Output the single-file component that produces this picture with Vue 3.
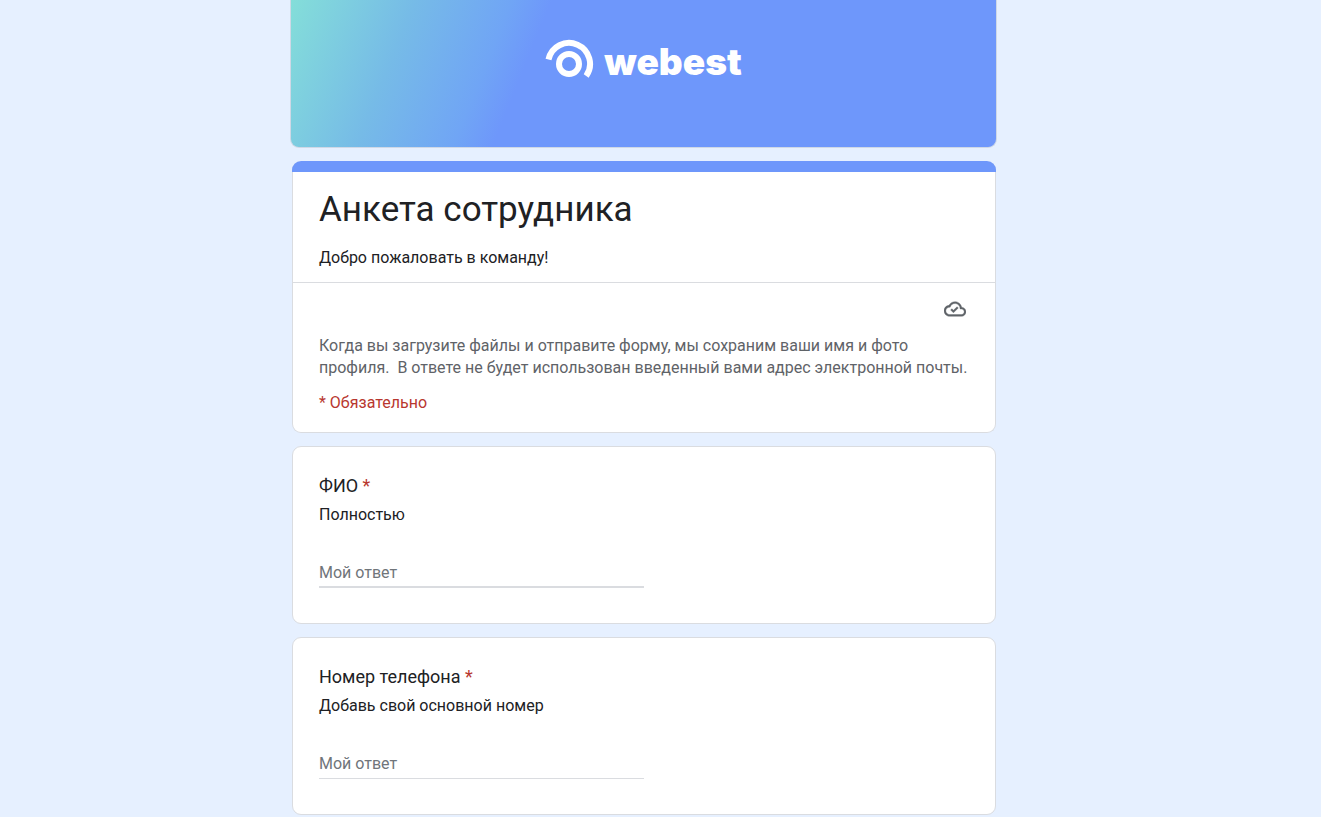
<script setup>
import { ref } from 'vue'

const questions = ref([
  { id: 'name', title: 'ФИО', hint: 'Полностью', answer: '', active: true },
  { id: 'phone', title: 'Номер телефона', hint: 'Добавь свой основной номер', answer: '', active: false },
])
</script>

<template>
  <main class="page">
    <form class="column" @submit.prevent>
      <header class="banner">
        <svg class="mark" viewBox="0 0 50 42" aria-hidden="true">
          <circle cx="24" cy="26" r="10" />
          <path d="M3.5 21.5A21 21 0 1 1 41.2 38" />
        </svg>
        <span class="brand">webest</span>
      </header>

      <section class="card intro">
        <div class="heading">
          <h1>Анкета сотрудника</h1>
          <p class="welcome">Добро пожаловать в команду!</p>
        </div>
        <div class="notice">
          <div class="status">
            <svg viewBox="0 0 24 24" aria-hidden="true">
              <path d="M19.35 10.04C18.67 6.59 15.64 4 12 4 9.11 4 6.61 5.64 5.36 8.04 2.34 8.36 0 10.91 0 14c0 3.31 2.69 6 6 6h13c2.76 0 5-2.24 5-5 0-2.64-2.05-4.78-4.65-4.96zM19 18H6c-2.21 0-4-1.79-4-4s1.79-4 4-4h.71C7.37 7.69 9.48 6 12 6c3.04 0 5.5 2.46 5.5 5.5v.5H19c1.66 0 3 1.34 3 3s-1.34 3-3 3z" />
              <path d="M10.3 16.2L7.2 13.1l1.4-1.4 1.7 1.7 3.9-3.9 1.4 1.4z" />
            </svg>
          </div>
          <p class="privacy">Когда вы загрузите файлы и отправите форму, мы сохраним ваши имя и фото<br />профиля.&nbsp; В ответе не будет использован введенный вами адрес электронной почты.</p>
          <p class="required">* Обязательно</p>
        </div>
      </section>

      <section v-for="q in questions" :key="q.id" class="card question">
        <label class="title" :for="q.id">{{ q.title }} <span class="star">*</span></label>
        <p class="hint">{{ q.hint }}</p>
        <input :id="q.id" v-model="q.answer" class="answer" :class="{ active: q.active }" type="text" placeholder="Мой ответ" />
      </section>
    </form>
  </main>
</template>

<style>
body {
  margin: 0;
  background: #e6f0ff;
}
</style>

<style scoped>
.page {
  box-sizing: border-box;
  padding: 0 33px 0 0;
  font-family: Roboto, "Noto Sans", sans-serif;
  color: #202124;
}
.column {
  box-sizing: border-box;
  display: flex;
  flex-direction: column;
  max-width: 704px;
  margin: 0 auto;
}
.banner {
  display: flex;
  align-items: center;
  justify-content: center;
  gap: 9px;
  padding: 38px 0 67px;
  margin: 0 -1px 13px -2px;
  border: 1px solid #cfd8e6;
  border-top: 0;
  border-radius: 0 0 9px 9px;
  background: linear-gradient(112deg, #84ded9 0, #76bbe7 115px, #70a5f5 205px, #6e97fb 242px);
  color: #fff;
}
.mark {
  width: 50px;
  height: 42px;
  fill: none;
  stroke: currentColor;
  stroke-width: 6;
}
.brand {
  padding-top: 6px;
  font: 900 37px/36px Inter, Roboto, sans-serif;
}
.card {
  background: #fff;
  border: 1px solid #dadce0;
  border-radius: 9px;
  margin-bottom: 13px;
}
h1,
p {
  margin: 0;
  font-weight: 400;
}
.intro {
  border-top: 0;
}
.intro::before {
  content: "";
  display: block;
  height: 11px;
  margin: 0 -1px;
  border-radius: 9px 9px 0 0;
  background: #6e97fb;
}
.heading {
  padding: 15px 26px 12px;
  border-bottom: 1px solid #dadce0;
}
h1 {
  font-size: 35px;
  line-height: 46px;
}
.welcome {
  margin-top: 13px;
  font-size: 16px;
  line-height: 24px;
}
.notice {
  padding: 15px 26px 18px;
  font-size: 16px;
  line-height: 22px;
  color: #5f6368;
}
.status {
  display: flex;
  justify-content: flex-end;
  padding-right: 3px;
  margin-bottom: 15px;
}
.status svg {
  width: 22px;
  height: 22px;
  fill: #5f6368;
  stroke: #5f6368;
  stroke-width: 0.4;
}
.required {
  margin-top: 13px;
  color: #b8372f;
}
.question {
  display: flex;
  flex-direction: column;
  align-items: flex-start;
  padding: 26px 26px 35px;
}
.title {
  font-size: 18px;
  line-height: 26px;
}
.star {
  color: #b8372f;
}
.hint {
  margin-top: 5px;
  font-size: 16px;
  line-height: 22px;
}
.answer {
  box-sizing: border-box;
  width: 50%;
  height: 28px;
  margin-top: 34px;
  padding: 0 0 2px;
  border: 0;
  border-bottom: 1px solid #dadce0;
  outline: 0;
  background: transparent;
  font: 16px/22px Roboto, "Noto Sans", sans-serif;
  color: #202124;
}
.answer.active {
  border-bottom-width: 2px;
}
.answer::placeholder {
  color: #70757a;
  opacity: 1;
}
</style>
